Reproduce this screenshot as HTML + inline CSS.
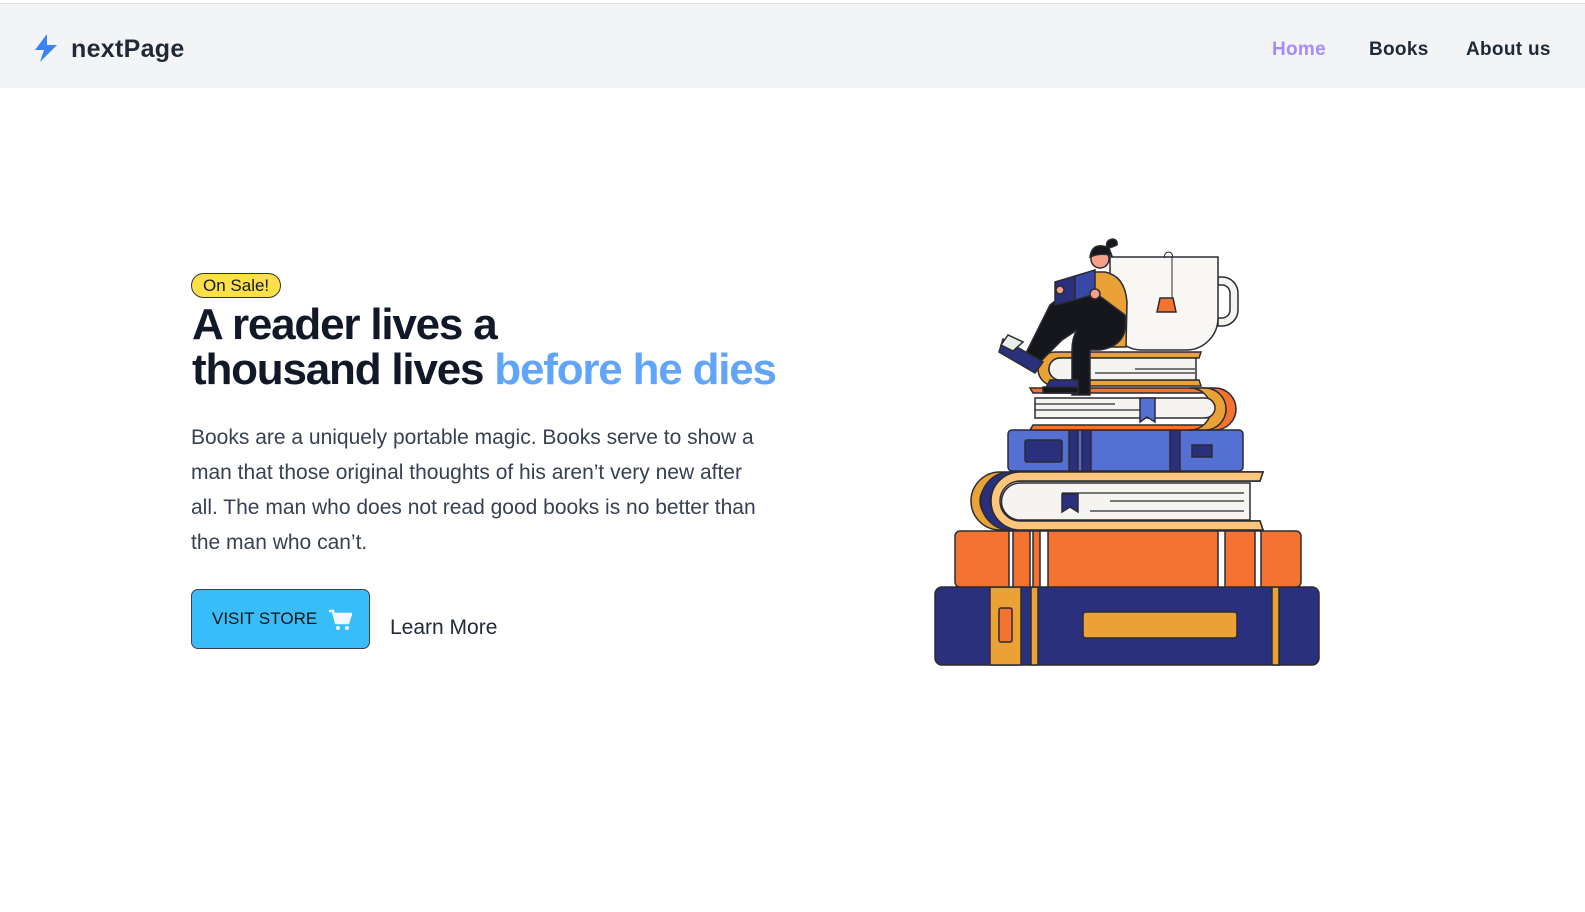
<!DOCTYPE html>
<html><head><meta charset="utf-8"><style>
*{margin:0;padding:0;box-sizing:border-box}
body{width:1585px;height:912px;background:#fff;font-family:"Liberation Sans",sans-serif;position:relative;overflow:hidden;color:#111827}
.nav{position:absolute;left:0;top:3px;width:1585px;height:85px;background:#f3f4f6;border-top:1px solid #dcdcdc}
.logo{position:absolute;left:71px;top:31px;font-size:25px;font-weight:700;color:#1f2937;letter-spacing:0.3px}
.nl{position:absolute;top:35px;font-size:19px;font-weight:700;color:#1f2937;letter-spacing:0.3px}
.badge{position:absolute;left:191px;top:273px;height:25px;padding:0 11px;background:#fde047;border:1px solid #333;border-radius:13px;font-size:17px;line-height:23px}
h1{position:absolute;left:192px;top:302px;font-size:44px;line-height:45px;font-weight:700;letter-spacing:-1.2px;color:#111827}
h1 span{color:#60a5fa}
p{position:absolute;left:191px;top:420px;width:700px;white-space:nowrap;font-size:21px;line-height:35px;color:#374151}
.btn{position:absolute;left:191px;top:589px;width:179px;height:60px;background:#38bdf8;border:1px solid #374151;border-radius:7px;font-size:17px;color:#111;padding:19px 0 0 20px}
.lm{position:absolute;left:390px;top:616px;font-size:21px;color:#1f2937}
</style></head><body>
<div class="nav">
<svg style="position:absolute;left:34px;top:30px" width="24" height="28" viewBox="0 0 24 28"><path d="M13 0 L1 16 L10 16 L6 28 L23 11 L13 11 Z" fill="#3b82f6"/></svg>
<div class="logo">nextPage</div>
<div class="nl" style="left:1272px;color:#a78bfa">Home</div>
<div class="nl" style="left:1369px">Books</div>
<div class="nl" style="left:1466px">About us</div>
</div>
<div class="badge">On Sale!</div>
<h1>A reader lives a<br>thousand lives <span>before he dies</span></h1>
<p>Books are a uniquely portable magic. Books serve to show a<br>man that those original thoughts of his aren’t very new after<br>all. The man who does not read good books is no better than<br>the man who can’t.</p>
<div class="btn">VISIT STORE
<svg style="position:absolute;left:136px;top:19px" width="24" height="22" viewBox="0 0 24 22"><path d="M1 2h4l3 12h12l3-9H7" fill="none" stroke="#f0f9ff" stroke-width="2.5"/><path d="M7 5h15l-2 8H9z" fill="#f0f9ff"/><circle cx="10" cy="19" r="2" fill="#f0f9ff"/><circle cx="19" cy="19" r="2" fill="#f0f9ff"/></svg></div>
<div class="lm">Learn More</div>
<svg style="position:absolute;left:0;top:0" width="1585" height="912" viewBox="0 0 1585 912">
<g stroke="#2b2b33" stroke-width="1.5">
<rect x="935" y="587" width="384" height="78" rx="7" fill="#2a307c"/>
<rect x="990" y="587" width="31" height="78" fill="#eaa237"/>
<rect x="1031" y="587" width="7" height="78" fill="#eaa237"/>
<rect x="999" y="608" width="13" height="34" rx="2" fill="#f47330"/>
<rect x="1083" y="612" width="154" height="26" rx="3" fill="#eaa237"/>
<rect x="1272" y="587" width="7" height="78" fill="#eaa237"/>
<rect x="955" y="531" width="346" height="56" rx="5" fill="#f47330"/>
<rect x="1009" y="531" width="4" height="56" fill="#fff"/>
<rect x="1030" y="531" width="3" height="56" fill="#fff"/>
<rect x="1040" y="531" width="8" height="56" fill="#fff"/>
<rect x="1218" y="531" width="7" height="56" fill="#fff"/>
<rect x="1255" y="531" width="6" height="56" fill="#fff"/>
<path d="M1000 472 H1263 l-3 9 H1000 a20 20 0 0 0 0 40 H1260 l3 9 H1000 a29 29 0 0 1 0-58z" fill="#eaa237"/>
<path d="M1010 472 H1263 l-3 9 H1010 a20 20 0 0 0 0 40 H1260 l3 9 H1010 a29 29 0 0 1 0-58z" fill="#2a307c"/>
<path d="M1020 472 H1263 l-3 9 H1020 a20 20 0 0 0 0 40 H1260 l3 9 H1020 a29 29 0 0 1 0-58z" fill="#fec57c"/>
<path d="M1020 483 H1250 V520 H1020 a18.5 18.5 0 0 1 0-37z" fill="#f5f4f1"/>
<path d="M1062 493h182M1110 501h134M1090 511h154" stroke-width="1.2"/>
<path d="M1062 494v18l8-5 8 5v-18z" fill="#2a307c"/>
<rect x="1008" y="430" width="235" height="41" rx="4" fill="#5470d2"/>
<rect x="1025" y="440" width="37" height="22" rx="2" fill="#2a307c"/>
<rect x="1069" y="430" width="9" height="41" fill="#2a307c"/>
<rect x="1082" y="430" width="9" height="41" fill="#2a307c"/>
<rect x="1170" y="430" width="10" height="41" fill="#2a307c"/>
<rect x="1192" y="445" width="20" height="12" fill="#2a307c"/>
<path d="M1030 388 H1215 a21 21 0 0 1 0 42 H1030 l3-5 H1210 a16 16 0 0 0 0-32 H1033z" fill="#f47330"/>
<path d="M1190 388 h15 a21 21 0 0 1 0 42 h-15 a21 21 0 0 0 0-42z" fill="#eaa237"/>
<path d="M1035 398 H1205 a10 10 0 0 1 0 20 H1035z" fill="#f5f4f1"/>
<path d="M1035 404h80M1035 410h110" stroke-width="1.2"/>
<path d="M1140 398v24l7-5 8 5v-24z" fill="#5470d2"/>
<path d="M1055 352 H1201 l-2 6 H1060 a11 11 0 0 0 0 22 H1199 l2 6 H1055 a17 17 0 0 1 0-34z" fill="#eaa237"/>
<path d="M1060 358 H1196 V380 H1060 a11 11 0 0 1 0-22z" fill="#f5f4f1"/>
<path d="M1135 369h60M1095 373h100" stroke-width="1.2"/>
<path d="M1218 277 h4 a16 16 0 0 1 16 16 v17 a16 16 0 0 1-16 16 h-4 v-8 h4 a8 8 0 0 0 8-8 v-17 a8 8 0 0 0-8-8 h-4z" fill="#f5f4f1"/>
<path d="M1110 257 H1218 V318 a32 32 0 0 1-32 32 H1142 a32 32 0 0 1-32-32z" fill="#f8f7f4"/>
<path d="M1165 258 a4 4 0 1 1 7 0 v42" fill="none" stroke-width="1"/>
<path d="M1160 298 h13 l3 14 h-19z" fill="#f47330"/>
<path d="M1095 272 h10 q20 4 22 30 l-1 45 h-40 z" fill="#eaa237"/>
<path d="M1050 305 q30-25 55-5 l20 15 q5 30-25 35 l-10 0 v45 h-18 v-45 q0-12 5-20 l-15 10 l-25 25 -12-10z" fill="#15171c"/>
<path d="M1003 339 l40 23 -8 11 -36-21z" fill="#2a307c"/>
<path d="M1008 335 l-7 10 12 6 10-9z" fill="#e8eee9"/>
<path d="M1050 380 h28 v13 h-35z" fill="#2a307c"/>
<path d="M1043 387 h35 v6 h-35z" fill="#15171c"/>
<circle cx="1100" cy="259" r="9" fill="#f6a08a"/>
<path d="M1090 257 q2-15 17-10 q-2-7 6-8 q5 1 4 6 q-4 2-8 3 l3 8 q-10-4-22 1z" fill="#15171c"/>
<path d="M1055 282 l20-6 v24 l-20 5z" fill="#2a307c"/>
<path d="M1075 276 l20 -6 v24 l-20 6z" fill="#3848a8"/>
<circle cx="1060" cy="290" r="4" fill="#f6a08a"/>
<circle cx="1095" cy="294" r="5" fill="#f6a08a"/>
</g>
</svg>
</body></html>
